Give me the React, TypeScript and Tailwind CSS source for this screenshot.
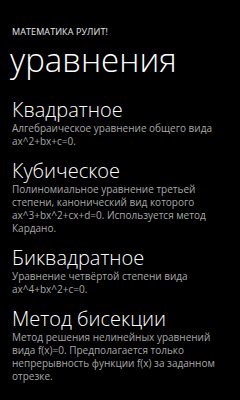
import React from "react";

const items = [
  {
    title: "Квадратное",
    desc: "Алгебраическое уравнение общего вида ax^2+bx+c=0.",
  },
  {
    title: "Кубическое",
    desc: "Полиномиальное уравнение третьей степени, канонический вид которого ax^3+bx^2+cx+d=0. Используется метод Кардано.",
  },
  {
    title: "Биквадратное",
    desc: "Уравнение четвёртой степени вида ax^4+bx^2+c=0.",
  },
  {
    title: "Метод бисекции",
    desc: "Метод решения нелинейных уравнений вида f(x)=0. Предполагается только непрерывность функции f(x) за заданном отрезке.",
  },
];

export default function App() {
  return (
    <div
      className="w-[240px] h-[400px] bg-black text-white overflow-hidden"
      style={{ fontFamily: '"Open Sans", "Noto Sans", sans-serif' }}
    >
      <div className="pl-3 pt-[26px] text-[9px] leading-[12px] font-normal tracking-[0.1px] text-[#e8e8e8]">
        МАТЕМАТИКА РУЛИТ!
      </div>
      <div className="pl-[10px] mt-[2px] text-[33px] leading-[40px] font-light">
        уравнения
      </div>
      <div className="flex flex-col gap-[11px] pl-3 pr-2 mt-[18px]">
        {items.map((it) => (
          <div key={it.title} className="flex flex-col">
            <div className="text-[20px] leading-[24px] font-light">{it.title}</div>
            <div className="text-[10px] leading-[13px] text-[#a8a8a8] pr-4">{it.desc}</div>
          </div>
        ))}
      </div>
    </div>
  );
}
